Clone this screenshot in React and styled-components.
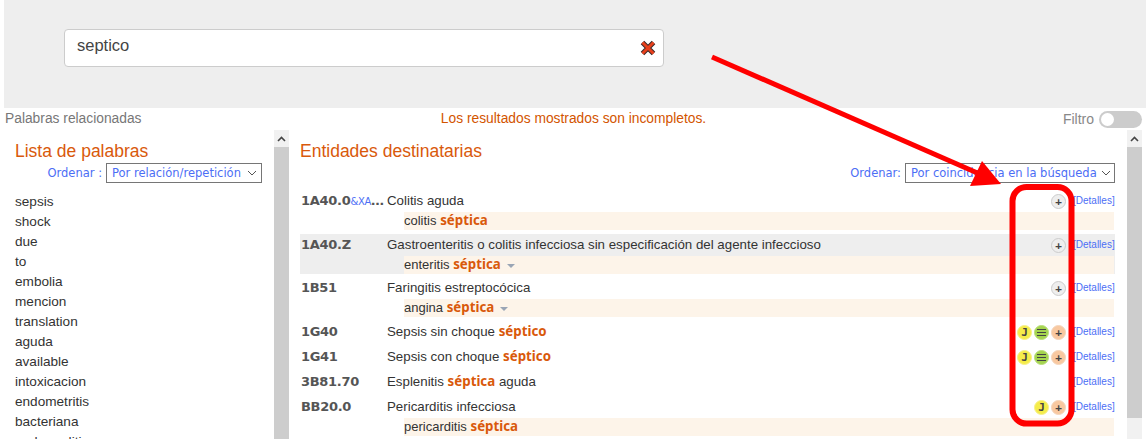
import React from "react";
import styled, { createGlobalStyle } from "styled-components";

const Global = createGlobalStyle`
  html, body { margin: 0; padding: 0; background: #fff; overflow: hidden; }
  body { font-family: "Liberation Sans", Arial, sans-serif; color: #333; }
`;

const Page = styled.div`
  position: relative;
  width: 1146px;
  height: 439px;
  overflow: hidden;
  padding-left: 4px;
  box-sizing: border-box;
`;

const SearchBand = styled.div`
  height: 108px;
  background: #eee;
  padding: 29px 0 0 60px;
  box-sizing: border-box;
`;

const SearchBox = styled.div`
  width: 600px;
  height: 38px;
  box-sizing: border-box;
  background: #fff;
  border: 1px solid #ccc;
  border-radius: 4px;
  display: flex;
  justify-content: space-between;
  padding: 4px 6px 0 12px;
  font-size: 16.5px;
  line-height: 22px;
  color: #444;
`;

const ClearIcon = styled.svg`
  width: 18px;
  height: 18px;
  margin-top: 5px;
`;

const InfoBar = styled.div`
  height: 22px;
  display: grid;
  grid-template-columns: 1fr auto 1fr;
  align-items: center;
  font-size: 14px;
  line-height: 22px;
  padding: 0 4px 0 1px;
`;

const Muted = styled.span`
  color: #777;
  font-size: 13.8px;
`;

const Warning = styled.span`
  color: #d35400;
  font-size: 13.8px;
`;

const FilterGroup = styled.div`
  display: flex;
  justify-content: flex-end;
  align-items: center;
  gap: 5px;
  color: #888;
`;

const Toggle = styled.div`
  width: 43px;
  height: 17px;
  border-radius: 9px;
  background: #ccc;
  padding: 2px;
  box-sizing: border-box;
  &::before {
    content: "";
    display: block;
    width: 13px;
    height: 13px;
    border-radius: 50%;
    background: #fff;
  }
`;

const Columns = styled.div`
  display: flex;
  height: 309px;
`;

const WordPane = styled.div`
  width: 270px;
  padding: 10px 0 0 11px;
  box-sizing: border-box;
  overflow: hidden;
  flex: none;
`;

const EntityPane = styled.div`
  width: 838px;
  padding: 10px 12px 0 11px;
  box-sizing: border-box;
  overflow: hidden;
  flex: none;
`;

const Heading = styled.h2`
  margin: 0;
  font-size: 17.5px;
  font-weight: 400;
  line-height: 23px;
  color: #d9590b;
`;

const SortRow = styled.div`
  display: flex;
  justify-content: flex-end;
  align-items: center;
  gap: ${(p) => p.$gap}px;
  padding-right: ${(p) => p.$right}px;
  font-family: "DejaVu Sans", sans-serif;
  font-size: 11.5px;
  color: #4c6ef5;
  height: 20px;
`;

const SortSelect = styled.div`
  width: ${(p) => p.$width}px;
  height: 20px;
  box-sizing: border-box;
  border: 1px solid #767676;
  display: flex;
  align-items: center;
  justify-content: space-between;
  padding: 0 4px 0 5px;
  white-space: nowrap;
  overflow: hidden;
`;

const Chevron = styled.svg`
  width: 10px;
  height: 6px;
  flex: none;
  margin-left: 4px;
`;

const WordList = styled.ul`
  list-style: none;
  margin: 9px 0 0;
  padding: 0;
  font-size: 13.6px;
  line-height: 20px;
  color: #333;
`;

const Scrollbar = styled.div`
  width: 15px;
  flex: none;
  background: #f1f1f1;
  display: flex;
  flex-direction: column;
`;

const ScrollArrow = styled.div`
  height: 17px;
  display: flex;
  justify-content: center;
  align-items: center;
  flex: none;
`;

const ScrollThumb = styled.div`
  background: #cdcdcd;
  height: ${(p) => p.$height}px;
`;

const ResultList = styled.div`
  margin-top: 7px;
`;

const Row = styled.div`
  display: grid;
  grid-template-columns: 86px 1fr auto;
  padding: 0 1px;
  background: ${(p) => (p.$shaded ? "#eee" : "transparent")};
  margin-bottom: ${(p) => p.$after}px;
`;

const Code = styled.div`
  font-family: "DejaVu Sans", sans-serif;
  font-weight: 700;
  font-size: 13px;
  letter-spacing: -0.3px;
  line-height: 22px;
  height: 22px;
  color: #555;
  white-space: nowrap;
`;

const CodeExtra = styled.span`
  font-weight: 400;
  font-size: 10px;
  color: #4c6ef5;
`;

const Title = styled.div`
  font-size: 13.3px;
  line-height: 22px;
  height: 22px;
  color: #333;
  white-space: nowrap;
`;

const Match = styled.b`
  font-family: "Noto Sans", sans-serif;
  font-weight: 700;
  font-size: 13.3px;
  line-height: 1;
  color: #d9590b;
`;

const Actions = styled.div`
  display: flex;
  justify-content: flex-end;
  align-items: center;
  height: 22px;
  gap: 2px;
`;

const Badge = styled.span`
  width: 15px;
  height: 15px;
  box-sizing: border-box;
  border-radius: 50%;
  border: 1px solid ${(p) => p.$edge};
  background: ${(p) => p.$fill};
  display: flex;
  align-items: center;
  justify-content: center;
  font-family: "DejaVu Sans Mono", monospace;
  font-weight: 700;
  font-size: 11px;
  line-height: 1;
  color: #444;
`;

const DetailsLink = styled.a`
  font-size: 10px;
  color: #4c6ef5;
  width: 41px;
  margin-left: 5px;
  margin-top: -2px;
  white-space: nowrap;
`;

const Synonym = styled.div`
  grid-column: 1 / -1;
  margin-left: 103px;
  background: #fdf4e9;
  height: 18px;
  font-size: 13px;
  line-height: 18px;
  color: #333;
`;

const Caret = styled.span`
  display: inline-block;
  width: 0;
  height: 0;
  margin-left: 6px;
  vertical-align: 1px;
  border-left: 4px solid transparent;
  border-right: 4px solid transparent;
  border-top: 4px solid #9aa5b5;
`;

const Annotation = styled.svg`
  position: absolute;
  left: 0;
  top: 0;
  pointer-events: none;
`;

const PLUS_GRAY = { fill: "#eee", edge: "#ccc" };
const PLUS_ORANGE = { fill: "#f8c8a0", edge: "#f5d5bb" };

const words = ["sepsis", "shock", "due", "to", "embolia", "mencion", "translation", "aguda", "available", "intoxicacion", "endometritis", "bacteriana", "endocarditis"];

const Plus = ({ tone }) => <Badge $fill={tone.fill} $edge={tone.edge}>+</Badge>;
const JBadge = () => <Badge $fill="#f5ec4a" $edge="#f7f08a">J</Badge>;
const ListBadge = () => (
  <Badge $fill="#a4d44e" $edge="#b9dd7a">
    <svg width="9" height="8" viewBox="0 0 9 8">
      <path d="M0 1.5h9M0 4.5h9M0 7.5h9" stroke="#444" strokeWidth="1" />
    </svg>
  </Badge>
);

const Down = () => (
  <Chevron viewBox="0 0 10 6">
    <path d="M1 1l4 4 4-4" fill="none" stroke="#555" strokeWidth="1" />
  </Chevron>
);

const Bar = ({ thumb }) => (
  <Scrollbar>
    <ScrollArrow>
      <svg width="9" height="6" viewBox="0 0 9 6">
        <path d="M1 5l3.5-3.5L8 5" fill="none" stroke="#444" strokeWidth="1.6" />
      </svg>
    </ScrollArrow>
    <ScrollThumb $height={thumb} />
  </Scrollbar>
);

const Result = ({ code, extra, title, badges, synonym, caret, shaded, after = 3 }) => (
  <Row $shaded={shaded} $after={after}>
    <Code>{code}{extra && <CodeExtra>{extra}</CodeExtra>}{extra && "…"}</Code>
    <Title>{title}</Title>
    <Actions>
      {badges}
      <DetailsLink>[Detalles]</DetailsLink>
    </Actions>
    {synonym && (
      <Synonym>
        {synonym} <Match>séptica</Match>
        {caret && <Caret />}
      </Synonym>
    )}
  </Row>
);

export default function App() {
  return (
    <Page>
      <Global />
      <SearchBand>
        <SearchBox>
          septico
          <ClearIcon viewBox="0 0 18 18">
            <path d="M3.5 3.5l11 11M14.5 3.5l-11 11" stroke="#3a2a2a" strokeWidth="5" />
            <path d="M3.5 3.5l11 11M14.5 3.5l-11 11" stroke="#e8401c" strokeWidth="3" />
          </ClearIcon>
        </SearchBox>
      </SearchBand>
      <InfoBar>
        <Muted>Palabras relacionadas</Muted>
        <Warning>Los resultados mostrados son incompletos.</Warning>
        <FilterGroup>
          Filtro
          <Toggle />
        </FilterGroup>
      </InfoBar>
      <Columns>
        <WordPane>
          <Heading>Lista de palabras</Heading>
          <SortRow $gap={4} $right={12}>
            Ordenar :
            <SortSelect $width={156}>
              Por relación/repetición
              <Down />
            </SortSelect>
          </SortRow>
          <WordList>
            {words.map((w) => <li key={w}>{w}</li>)}
          </WordList>
        </WordPane>
        <Bar thumb={292} />
        <EntityPane>
          <Heading>Entidades destinatarias</Heading>
          <SortRow $gap={4} $right={0}>
            Ordenar:
            <SortSelect $width={210}>
              Por coincidencia en la búsqueda
              <Down />
            </SortSelect>
          </SortRow>
          <ResultList>
            <Result code="1A40.0" extra="&XA" title="Colitis aguda" badges={<Plus tone={PLUS_GRAY} />} synonym="colitis" after={4} />
            <Result code="1A40.Z" shaded title="Gastroenteritis o colitis infecciosa sin especificación del agente infeccioso" badges={<Plus tone={PLUS_GRAY} />} synonym="enteritis" caret after={3} />
            <Result code="1B51" title="Faringitis estreptocócica" badges={<Plus tone={PLUS_GRAY} />} synonym="angina" caret after={4} />
            <Result code="1G40" title={<>Sepsis sin choque <Match>séptico</Match></>} badges={<><JBadge /><ListBadge /><Plus tone={PLUS_ORANGE} /></>} />
            <Result code="1G41" title={<>Sepsis con choque <Match>séptico</Match></>} badges={<><JBadge /><ListBadge /><Plus tone={PLUS_ORANGE} /></>} />
            <Result code="3B81.70" title={<>Esplenitis <Match>séptica</Match> aguda</>} />
            <Result code="BB20.0" title="Pericarditis infecciosa" badges={<><JBadge /><Plus tone={PLUS_ORANGE} /></>} synonym="pericarditis" />
          </ResultList>
        </EntityPane>
        <Bar thumb={271} />
      </Columns>
      <Annotation width="1146" height="439" viewBox="0 0 1146 439">
        <path d="M712 57L982 175" stroke="#f00" strokeWidth="5" fill="none" />
        <path d="M982 161L1001 184L970 186Z" fill="#f00" />
        <rect x="1012.5" y="187" width="59" height="236.5" rx="14" fill="none" stroke="#f00" strokeWidth="6" />
      </Annotation>
    </Page>
  );
}
